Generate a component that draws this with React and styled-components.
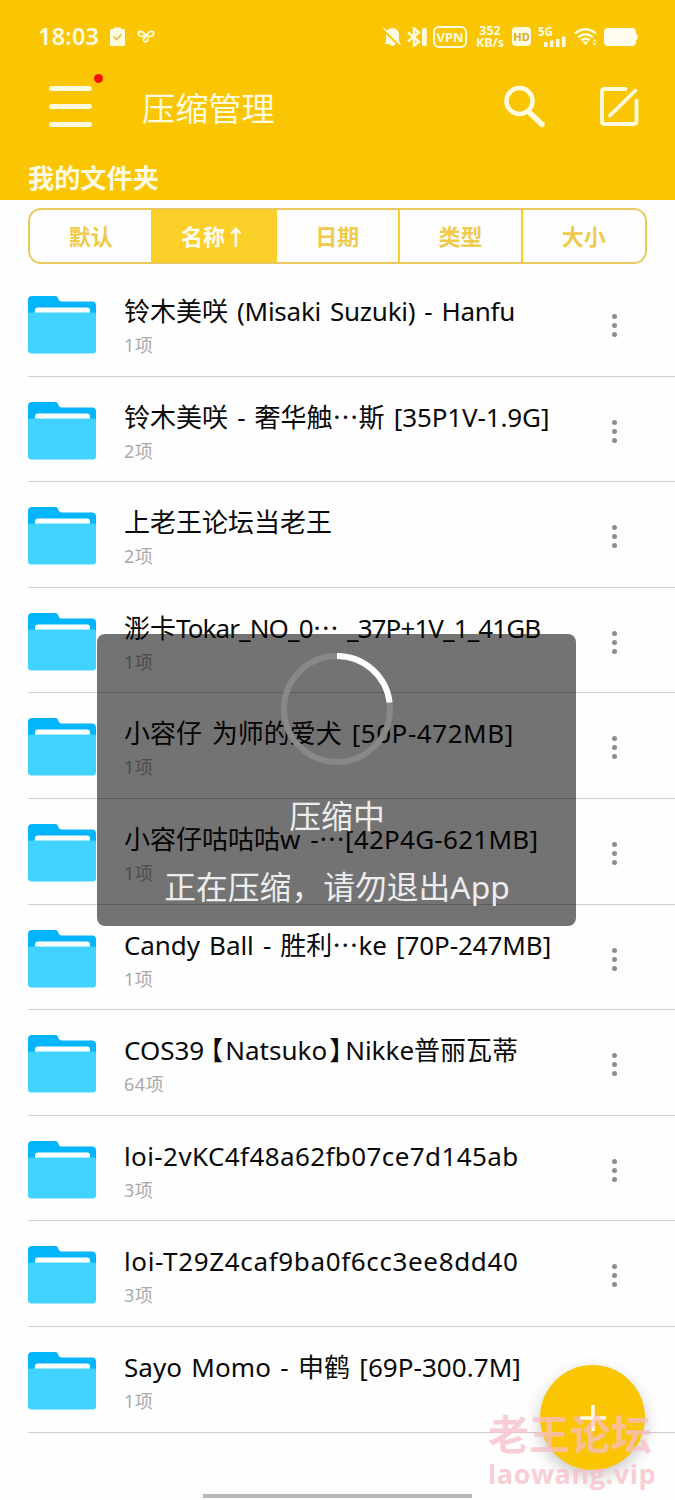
import React from "react";
import styled, { createGlobalStyle } from "styled-components";

const folders = [
  { name: "铃木美咲 (Misaki Suzuki) - Hanfu", count: 1, tracking: -0.25 },
  { name: "铃木美咲 - 奢华触⋯斯 [35P1V-1.9G]", count: 2, tracking: -0.12 },
  { name: "上老王论坛当老王", count: 2, tracking: 0 },
  { name: "浵卡Tokar_NO_0⋯ _37P+1V_1_41GB", count: 1, tracking: -0.9 },
  { name: "小容仔 为师的爱犬 [50P-472MB]", count: 1, tracking: 0.55 },
  { name: "小容仔咕咕咕w -⋯[42P4G-621MB]", count: 1, tracking: 0.27 },
  { name: "Candy Ball - 胜利⋯ke [70P-247MB]", count: 1, tracking: -0.08 },
  { name: "COS39【Natsuko】Nikke普丽瓦蒂", count: 64, tracking: 0 },
  { name: "loi-2vKC4f48a62fb07ce7d145ab", count: 3, tracking: 0.4 },
  { name: "loi-T29Z4caf9ba0f6cc3ee8dd40", count: 3, tracking: 0.65 },
  { name: "Sayo Momo - 申鹤 [69P-300.7M]", count: 1, tracking: 0.05 },
];

const tabs = ["默认", "名称↑", "日期", "类型", "大小"];

const bracketMargins = { "【": "0 2px 0 6px", "】": "0 3px 0 2px" };

const FolderIcon = () => (
  <svg width="68" height="58" viewBox="0 0 68 58">
    <path
      d="M0 4a4 4 0 0 1 4-4h23c2 0 2.6.8 3.300 2.600C31 4.600 31.600 5.600 34 5.600h30a4 4 0 0 1 4 4V30H0z"
      fill="#05b5fc"
    />
    <path d="M7 20v-5.500a3 3 0 0 1 3-3h49a3 3 0 0 1 3 3V20z" fill="#fff" />
    <path
      d="M0 18.500a2 2 0 0 1 2-2h64a2 2 0 0 1 2 2V54a3.500 3.500 0 0 1-3.500 3.500h-61A3.500 3.500 0 0 1 0 54z"
      fill="#41d3ff"
    />
  </svg>
);

// latin runs are tracked, chinese runs keep their full advance
const FolderName = ({ name, tracking }) => (
  <Name>
    {name.split(/([^ -~]+)/).map((run, index) =>
      index % 2 ? (
        <Han key={index} lang="zh-CN" $margin={bracketMargins[run]}>
          {run}
        </Han>
      ) : (
        <Latin key={index} $tracking={tracking}>
          {run}
        </Latin>
      )
    )}
  </Name>
);

const App = () => {
  return (
    <Screen>
      <GlobalStyle />
      <Header>
        <StatusBar>
          <Clock>18:03</Clock>
          <svg width="15" height="20" viewBox="0 0 15 20">
            <path d="M1.500 2H4V.5h7V2h2.500Q15 2 15 3.500v14q0 1.500-1.500 1.500h-12Q0 19 0 17.500v-14Q0 2 1.500 2z" fill="#fffbe0" />
            <path d="M3.500 9.500l3 3 5-5" fill="none" stroke="#e0b83c" strokeWidth="1.500" />
          </svg>
          <Knot width="18" height="13" viewBox="0 0 18 13">
            <path d="M9 5.200C7.500 7 1.500 6.800 1.300 3.800 1.200 1 5 .8 6.500 2.800L9 5.200c2.500 2.300 7.500 1.200 7.700-1.500.2-2.900-4-3-5.500-.7L7 8.500c-1.300 2 .3 3.600 2 3.300 2-.3 2.200-2.300 1-3.500" />
          </Knot>
          <Indicators>
            <svg width="18" height="20" viewBox="0 0 18 20">
              <path d="M3 8.500C3 4 5.500 1 9.500 1S16 4 16 8v6l1.500 3H1.500L3 14zM6 17h7q-3.500 4-7 0z" fill="#fffbe0" />
              <path d="M0 2.500l17 17" stroke="#fac502" strokeWidth="2" />
              <path d="M.5 1l17 16.500" stroke="#fffbe0" strokeWidth="1.500" />
            </svg>
            <svg width="20" height="20" viewBox="0 0 20 20">
              <path d="M1 5.500l11 9-5 4.300V1.200l5 4.300-11 9" fill="none" stroke="#fffbe0" strokeWidth="2.400" />
              <rect x="15" y="1" width="4.800" height="18" rx="1.500" fill="#fffbe0" />
            </svg>
            <Vpn>VPN</Vpn>
            <Speed>
              <span>352</span>
              <span>KB/s</span>
            </Speed>
            <Hd>HD</Hd>
            <Signal>
              <span>5G</span>
              <svg width="22" height="11" viewBox="0 0 22 11">
                <path d="M0 6h3.500v5H0zM6 4.500h3.500V11H6zM12 3h3.500v8H12zM18 .5h3.500V11H18z" fill="#fffbe0" />
              </svg>
            </Signal>
            <Wifi width="24" height="20" viewBox="0 0 24 20">
              <path d="M1 6.500q10.500-8.500 21 0M4.200 10.200q7.300-6 14.600 0M7.300 13.500q4.200-3.300 8.400 0" fill="none" stroke="#fffbe0" strokeWidth="2.400" />
              <path d="M8.800 15.200q2.700-1.800 5.400 0L11.500 18.500zM18.500 14.500l2-2.500 2 2.500zM18.500 16l2 2.500 2-2.500z" fill="#fffbe0" />
            </Wifi>
            <svg width="34" height="18" viewBox="0 0 34 18">
              <path d="M4 0h24q4 0 4 4v1.500q1.800.5 1.800 3.500t-1.800 3.500V14q0 4-4 4H4q-4 0-4-4V4q0-4 4-4z" fill="#fffdf0" />
            </svg>
          </Indicators>
        </StatusBar>
        <Toolbar>
          <MenuButton>
            <i />
            <i />
            <i />
            <Dot />
          </MenuButton>
          <Heading>压缩管理</Heading>
          <svg width="42" height="43" viewBox="0 0 42 43">
            <circle cx="15.500" cy="16" r="13" fill="none" stroke="#fffbe0" strokeWidth="4.600" />
            <path d="M26 28l12 11.500" stroke="#fffbe0" strokeWidth="5.400" strokeLinecap="round" />
          </svg>
          <EditIcon width="39" height="39" viewBox="0 0 39 39">
            <path d="M25.500 2H4.500Q2 2 2 4.500v30Q2 37 4.500 37h29q3 0 3-2.500V13.500M10 28.500L35.500 3.500" />
          </EditIcon>
        </Toolbar>
        <Path>我的文件夹</Path>
      </Header>
      <Tabs>
        {tabs.map((tab, index) => (
          <Tab key={tab} $active={index === 1}>
            {tab}
          </Tab>
        ))}
      </Tabs>
      <List>
        {folders.map((folder) => (
          <Row key={folder.name}>
            <FolderIcon />
            <Info>
              <FolderName name={folder.name} tracking={folder.tracking} />
              <Count>{folder.count}项</Count>
            </Info>
            <More>
              <i />
              <i />
              <i />
            </More>
          </Row>
        ))}
      </List>
      <AddButton>
        <svg width="28" height="28" viewBox="0 0 28 28">
          <path d="M14 1v26M1 14h26" stroke="#fffbe8" strokeWidth="3.600" />
        </svg>
      </AddButton>
      <Watermark>
        <b>老王论坛</b>
        <span>laowang.vip</span>
      </Watermark>
      <HomeBar />
      <Toast>
        <svg width="112" height="112" viewBox="0 0 112 112">
          <circle cx="56" cy="56" r="53" fill="none" stroke="#888" strokeWidth="6" />
          <path d="M56 3A53 53 0 0 1 108.600 49.500" fill="none" stroke="#fff" strokeWidth="6" />
        </svg>
        <ToastTitle>压缩中</ToastTitle>
        <ToastText>正在压缩，请勿退出App</ToastText>
      </Toast>
    </Screen>
  );
};

const GlobalStyle = createGlobalStyle`
  * {
    box-sizing: border-box;
  }
  body {
    margin: 0;
    background: #fefefe;
    font-family: "Noto Sans", "Noto Sans CJK SC", sans-serif;
  }
  svg {
    display: block;
    flex-shrink: 0;
  }
`;
const Screen = styled.div`
  position: relative;
  width: 675px;
  height: 1500px;
  overflow: hidden;
  background: #fefefe;
`;
const Header = styled.header`
  height: 200px;
  background: #fac502;
  color: #fffbe0;
`;
const StatusBar = styled.div`
  display: flex;
  align-items: center;
  height: 73px;
  padding: 0 37px 0 38px;
`;
const Clock = styled.span`
  width: 72px;
  font-size: 23.5px;
  font-weight: 600;
  letter-spacing: 0.2px;
  line-height: 32px;
  padding-bottom: 2px;
`;
const Knot = styled.svg`
  margin-left: 12px;
  fill: none;
  stroke: #fffbe0;
  stroke-width: 1.9;
`;
const Indicators = styled.div`
  display: flex;
  align-items: center;
  width: 255px;
  margin-left: auto;
  gap: 6px;
`;
const Vpn = styled.span`
  width: 34px;
  height: 22px;
  border: 2px solid #fffbe0;
  border-radius: 6px;
  font-size: 13px;
  font-weight: 700;
  line-height: 18px;
  text-align: center;
`;
const Speed = styled.span`
  display: flex;
  flex-direction: column;
  width: 30px;
  margin: 0 1px 0 2px;
  font-size: 12.5px;
  font-weight: 700;
  line-height: 12px;
  text-align: center;
`;
const Hd = styled.span`
  width: 19px;
  height: 19px;
  margin-right: 1px;
  border-radius: 4px;
  background: #fffbe0;
  color: #d9ac20;
  font-size: 11px;
  font-weight: 700;
  line-height: 19px;
  text-align: center;
`;
const Signal = styled.span`
  display: flex;
  flex-direction: column;
  width: 28px;
  font-size: 11.5px;
  font-weight: 700;
  line-height: 9px;
  svg {
    align-self: flex-end;
  }
`;
const Wifi = styled.svg`
  margin-left: 2px;
`;
const Toolbar = styled.div`
  display: flex;
  align-items: center;
  height: 67px;
  padding: 0 36px 0 49px;
`;
const MenuButton = styled.div`
  position: relative;
  display: flex;
  flex-direction: column;
  gap: 13px;
  width: 43px;
  i {
    height: 5px;
    border-radius: 3px;
    background: #fffbe0;
  }
`;
const Dot = styled.span`
  position: absolute;
  top: -12px;
  right: -11px;
  width: 9px;
  height: 9px;
  border-radius: 50%;
  background: #f5140a;
`;
const Heading = styled.h1`
  flex: 1;
  margin: 0 0 0 50px;
  padding-top: 4px;
  font-size: 33.2px;
  font-weight: 400;
  line-height: 44px;
`;
const EditIcon = styled.svg`
  margin-left: 54px;
  fill: none;
  stroke: #fffbe0;
  stroke-width: 3.8;
  stroke-linecap: round;
`;
const Path = styled.div`
  padding: 18px 0 0 28px;
  font-size: 26.2px;
  font-weight: 600;
  line-height: 40px;
`;
const Tabs = styled.nav`
  display: flex;
  width: 618.5px;
  height: 56px;
  margin: 8px 0 7px 28px;
  overflow: hidden;
  border: 2px solid #e9c95c;
  border-radius: 13px;
`;
const Tab = styled.div`
  flex: 1;
  background: ${({ $active }) => ($active ? "#facf27" : "transparent")};
  color: ${({ $active }) => ($active ? "#fffef0" : "#efca4c")};
  font-size: 22px;
  font-weight: 600;
  line-height: 52px;
  text-align: center;
  & + & {
    border-left: 2px solid ${({ $active }) => ($active ? "#facf27" : "#e9c95c")};
  }
`;
const List = styled.div`
  padding-left: 28px;
`;
const Row = styled.div`
  display: flex;
  height: 105.6px;
  padding-top: 25px;
  border-bottom: 1px solid #cfcfcf;
`;
const Info = styled.div`
  flex: 1;
  margin: -1px 0 0 28px;
`;
const Name = styled.div`
  height: 32px;
  color: #0a0a0a;
  font-size: 26px;
  line-height: 32px;
  white-space: nowrap;
`;
const Latin = styled.span`
  letter-spacing: ${({ $tracking }) => $tracking}px;
  word-spacing: 2.5px;
`;
const Han = styled.span`
  margin: ${({ $margin }) => $margin || 0};
  font-family: "Noto Sans CJK SC", sans-serif;
  font-feature-settings: "halt";
  line-height: 0;
`;
const Count = styled.div`
  margin-top: 5px;
  color: #a9a9a9;
  font-size: 18px;
  letter-spacing: 0.5px;
  line-height: 26px;
`;
const More = styled.div`
  display: flex;
  flex-direction: column;
  gap: 4px;
  padding-top: 18px;
  margin-right: 58px;
  i {
    width: 5px;
    height: 5px;
    border-radius: 50%;
    background: #8c8c8c;
  }
`;
const AddButton = styled.div`
  position: absolute;
  top: 1365px;
  left: 540px;
  display: flex;
  align-items: center;
  justify-content: center;
  width: 105px;
  height: 105px;
  border-radius: 50%;
  background: #fac502;
  box-shadow: 0 6px 16px rgba(0, 0, 0, 0.22);
`;
const Watermark = styled.div`
  position: absolute;
  top: 1410px;
  left: 488px;
  color: rgba(247, 190, 198, 0.75);
  white-space: nowrap;
  b {
    display: block;
    font-size: 41px;
    font-weight: 700;
    line-height: 48px;
  }
  span {
    display: block;
    font-family: "Open Sans", sans-serif;
    font-size: 27px;
    font-weight: 700;
    letter-spacing: 0.55px;
    line-height: 32px;
  }
`;
const HomeBar = styled.div`
  position: absolute;
  bottom: 2px;
  left: 203px;
  width: 269px;
  height: 4px;
  background: #b9b9b9;
`;
const Toast = styled.div`
  position: absolute;
  top: 634px;
  left: 97px;
  display: flex;
  flex-direction: column;
  align-items: center;
  width: 479px;
  height: 292px;
  padding-top: 19px;
  border-radius: 8px;
  background: rgba(0, 0, 0, 0.55);
  color: #ededed;
  font-size: 31.8px;
  line-height: 44px;
  white-space: nowrap;
`;
const ToastTitle = styled.div`
  margin: 29px 0 0 1px;
`;
const ToastText = styled.div`
  margin: 27px 0 0 1px;
`;
export default App;
